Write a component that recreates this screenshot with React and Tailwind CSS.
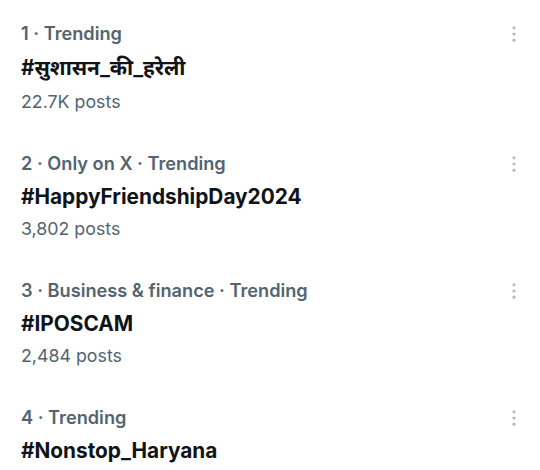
import React from 'react';

const trends = [
  { rank: 1, context: 'Trending', tag: '#सुशासन_की_हरेली', posts: '22.7K posts', tall: true },
  { rank: 2, context: 'Only on X · Trending', tag: '#HappyFriendshipDay2024', posts: '3,802 posts' },
  { rank: 3, context: 'Business & finance · Trending', tag: '#IPOSCAM', posts: '2,484 posts' },
  { rank: 4, context: 'Trending', tag: '#Nonstop_Haryana', posts: null },
];

const MoreIcon = () => (
  <svg width="18" height="18" viewBox="0 0 18 18" className="shrink-0">
    <circle cx="9" cy="2.8" r="1.6" fill="#b4bcc3" />
    <circle cx="9" cy="9" r="1.6" fill="#b4bcc3" />
    <circle cx="9" cy="15.2" r="1.6" fill="#b4bcc3" />
  </svg>
);

const TrendItem = ({ trend }) => (
  <div className="pl-[21px] pr-[17px] pt-[19px] pb-[14px]">
    <div className="flex items-center justify-between h-[29px]">
      <span className="text-[18.2px] font-semibold text-[#536471] leading-[29px]">
        {trend.rank} · {trend.context}
      </span>
      <MoreIcon />
    </div>
    <div
      className={
        trend.tall
          ? 'text-[20.8px] font-bold text-[#0f1419] leading-[40px]'
          : 'text-[20.8px] font-bold text-[#0f1419] leading-[37px]'
      }
    >
      {trend.tag}
    </div>
    {trend.posts && (
      <div className="text-[17.8px] text-[#536471] leading-[28px]">{trend.posts}</div>
    )}
  </div>
);

export default function App() {
  return (
    <div className="w-[540px] h-[470px] overflow-hidden bg-white font-['Inter','Noto_Sans','Noto_Sans_CJK_SC',sans-serif]">
      {trends.map((t) => (
        <TrendItem key={t.rank} trend={t} />
      ))}
    </div>
  );
}
